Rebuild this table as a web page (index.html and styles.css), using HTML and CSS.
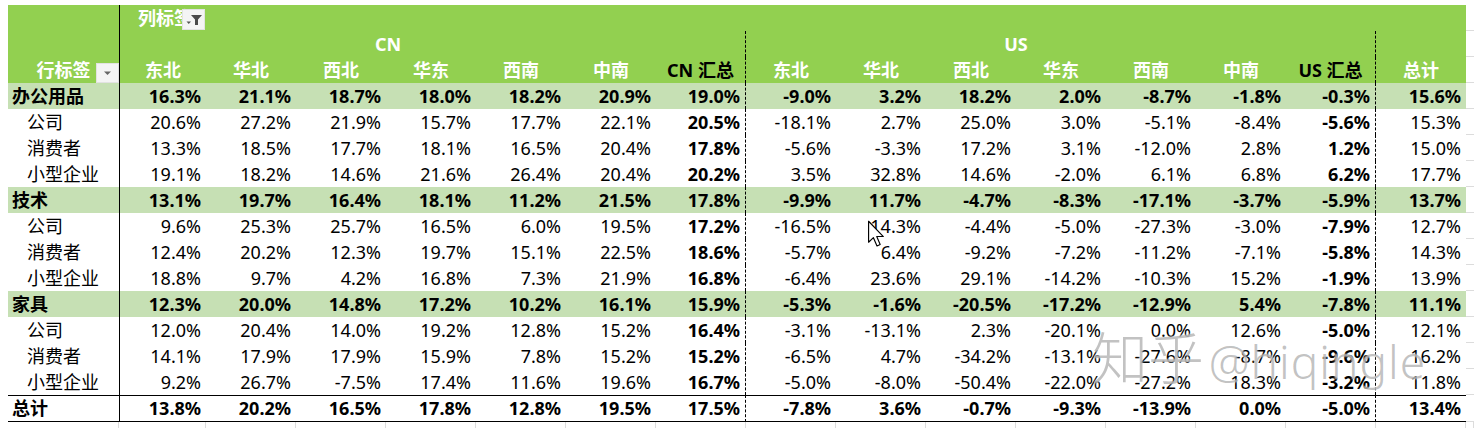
FILE: index.html
```html
<!DOCTYPE html>
<html lang="zh-CN">
<head>
<meta charset="utf-8">
<title>数据透视表</title>
<link rel="stylesheet" href="styles.css">
</head>
<body>
<div class="sheet">
  <div class="row hd">
    <div class="c"></div>
    <div class="c bl colhead">列标签<span class="btn btn-col"><svg width="23" height="21" viewBox="0 0 23 21"><path d="M4.5 12.5 L9 12.5 L6.75 15 Z" fill="#555"/><path d="M9 6 L20 6 L16 10.5 L16 16 L13 16 L13 10.5 Z" fill="#4a4a4a"/></svg></span></div>
    <div class="c span14"></div>
    <div class="ext"></div>
  </div>
  <div class="row hd">
    <div class="c"></div>
    <div class="c bl span6 ctr">CN</div>
    <div class="c sep"></div>
    <div class="c span6 ctr">US</div>
    <div class="c sep"></div>
    <div class="c"></div>
    <div class="ext"></div>
  </div>
  <div class="row hd">
    <div class="c ctr rowhead">行标签<span class="btn btn-row"><svg width="23" height="20" viewBox="0 0 23 20"><path d="M8 8.5 L15 8.5 L11.5 12 Z" fill="#666"/></svg></span></div>
    <div class="c bl ctr">东北</div>
    <div class="c ctr">华北</div>
    <div class="c ctr">西北</div>
    <div class="c ctr">华东</div>
    <div class="c ctr">西南</div>
    <div class="c ctr">中南</div>
    <div class="c ctr dk sep">CN 汇总</div>
    <div class="c ctr">东北</div>
    <div class="c ctr">华北</div>
    <div class="c ctr">西北</div>
    <div class="c ctr">华东</div>
    <div class="c ctr">西南</div>
    <div class="c ctr">中南</div>
    <div class="c ctr dk sep">US 汇总</div>
    <div class="c ctr">总计</div>
    <div class="ext"></div>
  </div>

  <div class="row cat">
    <div class="c lab">办公用品</div>
    <div class="c n bl">16.3%</div><div class="c n">21.1%</div><div class="c n">18.7%</div><div class="c n">18.0%</div><div class="c n">18.2%</div><div class="c n">20.9%</div><div class="c n sep">19.0%</div>
    <div class="c n">-9.0%</div><div class="c n">3.2%</div><div class="c n">18.2%</div><div class="c n">2.0%</div><div class="c n">-8.7%</div><div class="c n">-1.8%</div><div class="c n sep">-0.3%</div>
    <div class="c n">15.6%</div><div class="ext"></div>
  </div>
  <div class="row">
    <div class="c lab sub">公司</div>
    <div class="c n bl">20.6%</div><div class="c n">27.2%</div><div class="c n">21.9%</div><div class="c n">15.7%</div><div class="c n">17.7%</div><div class="c n">22.1%</div><div class="c n sep s">20.5%</div>
    <div class="c n">-18.1%</div><div class="c n">2.7%</div><div class="c n">25.0%</div><div class="c n">3.0%</div><div class="c n">-5.1%</div><div class="c n">-8.4%</div><div class="c n sep s">-5.6%</div>
    <div class="c n">15.3%</div><div class="ext"></div>
  </div>
  <div class="row">
    <div class="c lab sub">消费者</div>
    <div class="c n bl">13.3%</div><div class="c n">18.5%</div><div class="c n">17.7%</div><div class="c n">18.1%</div><div class="c n">16.5%</div><div class="c n">20.4%</div><div class="c n sep s">17.8%</div>
    <div class="c n">-5.6%</div><div class="c n">-3.3%</div><div class="c n">17.2%</div><div class="c n">3.1%</div><div class="c n">-12.0%</div><div class="c n">2.8%</div><div class="c n sep s">1.2%</div>
    <div class="c n">15.0%</div><div class="ext"></div>
  </div>
  <div class="row">
    <div class="c lab sub">小型企业</div>
    <div class="c n bl">19.1%</div><div class="c n">18.2%</div><div class="c n">14.6%</div><div class="c n">21.6%</div><div class="c n">26.4%</div><div class="c n">20.4%</div><div class="c n sep s">20.2%</div>
    <div class="c n">3.5%</div><div class="c n">32.8%</div><div class="c n">14.6%</div><div class="c n">-2.0%</div><div class="c n">6.1%</div><div class="c n">6.8%</div><div class="c n sep s">6.2%</div>
    <div class="c n">17.7%</div><div class="ext"></div>
  </div>

  <div class="row cat">
    <div class="c lab">技术</div>
    <div class="c n bl">13.1%</div><div class="c n">19.7%</div><div class="c n">16.4%</div><div class="c n">18.1%</div><div class="c n">11.2%</div><div class="c n">21.5%</div><div class="c n sep">17.8%</div>
    <div class="c n">-9.9%</div><div class="c n">11.7%</div><div class="c n">-4.7%</div><div class="c n">-8.3%</div><div class="c n">-17.1%</div><div class="c n">-3.7%</div><div class="c n sep">-5.9%</div>
    <div class="c n">13.7%</div><div class="ext"></div>
  </div>
  <div class="row">
    <div class="c lab sub">公司</div>
    <div class="c n bl">9.6%</div><div class="c n">25.3%</div><div class="c n">25.7%</div><div class="c n">16.5%</div><div class="c n">6.0%</div><div class="c n">19.5%</div><div class="c n sep s">17.2%</div>
    <div class="c n">-16.5%</div><div class="c n">14.3%</div><div class="c n">-4.4%</div><div class="c n">-5.0%</div><div class="c n">-27.3%</div><div class="c n">-3.0%</div><div class="c n sep s">-7.9%</div>
    <div class="c n">12.7%</div><div class="ext"></div>
  </div>
  <div class="row">
    <div class="c lab sub">消费者</div>
    <div class="c n bl">12.4%</div><div class="c n">20.2%</div><div class="c n">12.3%</div><div class="c n">19.7%</div><div class="c n">15.1%</div><div class="c n">22.5%</div><div class="c n sep s">18.6%</div>
    <div class="c n">-5.7%</div><div class="c n">6.4%</div><div class="c n">-9.2%</div><div class="c n">-7.2%</div><div class="c n">-11.2%</div><div class="c n">-7.1%</div><div class="c n sep s">-5.8%</div>
    <div class="c n">14.3%</div><div class="ext"></div>
  </div>
  <div class="row">
    <div class="c lab sub">小型企业</div>
    <div class="c n bl">18.8%</div><div class="c n">9.7%</div><div class="c n">4.2%</div><div class="c n">16.8%</div><div class="c n">7.3%</div><div class="c n">21.9%</div><div class="c n sep s">16.8%</div>
    <div class="c n">-6.4%</div><div class="c n">23.6%</div><div class="c n">29.1%</div><div class="c n">-14.2%</div><div class="c n">-10.3%</div><div class="c n">15.2%</div><div class="c n sep s">-1.9%</div>
    <div class="c n">13.9%</div><div class="ext"></div>
  </div>

  <div class="row cat">
    <div class="c lab">家具</div>
    <div class="c n bl">12.3%</div><div class="c n">20.0%</div><div class="c n">14.8%</div><div class="c n">17.2%</div><div class="c n">10.2%</div><div class="c n">16.1%</div><div class="c n sep">15.9%</div>
    <div class="c n">-5.3%</div><div class="c n">-1.6%</div><div class="c n">-20.5%</div><div class="c n">-17.2%</div><div class="c n">-12.9%</div><div class="c n">5.4%</div><div class="c n sep">-7.8%</div>
    <div class="c n">11.1%</div><div class="ext"></div>
  </div>
  <div class="row">
    <div class="c lab sub">公司</div>
    <div class="c n bl">12.0%</div><div class="c n">20.4%</div><div class="c n">14.0%</div><div class="c n">19.2%</div><div class="c n">12.8%</div><div class="c n">15.2%</div><div class="c n sep s">16.4%</div>
    <div class="c n">-3.1%</div><div class="c n">-13.1%</div><div class="c n">2.3%</div><div class="c n">-20.1%</div><div class="c n">0.0%</div><div class="c n">12.6%</div><div class="c n sep s">-5.0%</div>
    <div class="c n">12.1%</div><div class="ext"></div>
  </div>
  <div class="row">
    <div class="c lab sub">消费者</div>
    <div class="c n bl">14.1%</div><div class="c n">17.9%</div><div class="c n">17.9%</div><div class="c n">15.9%</div><div class="c n">7.8%</div><div class="c n">15.2%</div><div class="c n sep s">15.2%</div>
    <div class="c n">-6.5%</div><div class="c n">4.7%</div><div class="c n">-34.2%</div><div class="c n">-13.1%</div><div class="c n">-27.6%</div><div class="c n">-8.7%</div><div class="c n sep s">-9.6%</div>
    <div class="c n">16.2%</div><div class="ext"></div>
  </div>
  <div class="row">
    <div class="c lab sub">小型企业</div>
    <div class="c n bl">9.2%</div><div class="c n">26.7%</div><div class="c n">-7.5%</div><div class="c n">17.4%</div><div class="c n">11.6%</div><div class="c n">19.6%</div><div class="c n sep s">16.7%</div>
    <div class="c n">-5.0%</div><div class="c n">-8.0%</div><div class="c n">-50.4%</div><div class="c n">-22.0%</div><div class="c n">-27.2%</div><div class="c n">18.3%</div><div class="c n sep s">-3.2%</div>
    <div class="c n">11.8%</div><div class="ext"></div>
  </div>

  <div class="row tot">
    <div class="c lab">总计</div>
    <div class="c n bl">13.8%</div><div class="c n">20.2%</div><div class="c n">16.5%</div><div class="c n">17.8%</div><div class="c n">12.8%</div><div class="c n">19.5%</div><div class="c n sep">17.5%</div>
    <div class="c n">-7.8%</div><div class="c n">3.6%</div><div class="c n">-0.7%</div><div class="c n">-9.3%</div><div class="c n">-13.9%</div><div class="c n">0.0%</div><div class="c n sep">-5.0%</div>
    <div class="c n">13.4%</div><div class="ext"></div>
  </div>

  <div class="row foot">
    <div class="g"></div><div class="g"></div><div class="g"></div><div class="g"></div><div class="g"></div><div class="g"></div><div class="g"></div><div class="g"></div><div class="g"></div><div class="g"></div><div class="g"></div><div class="g"></div><div class="g"></div><div class="g"></div><div class="g"></div><div class="g"></div><div class="g"></div>
  </div>

  <div class="watermark"><span class="wm-cn">知乎</span> <span class="wm-en">@hiqingle</span></div>
  <svg class="cursor" width="21" height="28" viewBox="0 0 16 22"><path d="M1 1 L1 17.5 L4.8 13.9 L7.6 20.4 L10.1 19.3 L7.4 13 L12.6 13 Z" fill="#fff" stroke="#000" stroke-width="0.9" stroke-linejoin="round"/></svg>
</div>
</body>
</html>
```

FILE: styles.css
```css
body {
  margin: 0;
  background: #ffffff;
  font-family: "Noto Sans", "Noto Sans CJK SC", sans-serif;
  font-size: 18px;
  color: #000;
}

.sheet {
  position: relative;
  padding: 5px 0 0 8px;
}

.row {
  display: grid;
  grid-template-columns: 111px 87px repeat(14, 90px) 8px;
  height: 26px;
}

.c {
  box-sizing: border-box;
  line-height: 26px;
  white-space: nowrap;
  overflow: hidden;
}

.span14 { grid-column: span 14; }
.span6 { grid-column: span 6; }
.ctr { text-align: center; }

.hd .c {
  background: #92d050;
  color: #fff;
  font-weight: 700;
}

.hd .c.dk { color: #000; }

.colhead {
  position: relative;
  padding-left: 18px;
}

.rowhead {
  position: relative;
}

.btn {
  position: absolute;
  display: block;
  background: #f4f4f4;
  box-shadow: inset 0 0 0 1px #e2e2e2;
}

.btn svg { display: block; }

.btn-col {
  right: 1px;
  top: 4px;
  width: 23px;
  height: 21px;
}

.btn-row {
  right: 0;
  top: 6px;
  width: 23px;
  height: 20px;
}

.cat .c {
  background: #c6e0b4;
  font-weight: 700;
}

.lab { padding-left: 4px; }
.lab.sub { padding-left: 19px; }

.n {
  text-align: right;
  padding-right: 5px;
}

.s { font-weight: 700; }

.bl { border-left: 1px solid #000; }
.sep { border-right: 1px dashed #000; }

.ext {
  box-sizing: border-box;
  border-bottom: 1px solid #dcdcdc;
}

.row.tot { height: 27px; }

.tot .c {
  border-top: 1px solid #000;
  border-bottom: 1px solid #000;
  line-height: 25px;
  font-weight: 700;
}

.row.foot { height: 7px; }

.g {
  box-sizing: border-box;
  border-right: 1px solid #dcdcdc;
}

.watermark {
  position: absolute;
  left: 1092px;
  top: 324px;
  white-space: nowrap;
  color: rgba(120, 120, 120, 0.45);
  text-shadow: 0 0 2px rgba(255, 255, 255, 0.95);
  line-height: 62px;
}

.wm-cn {
  font-family: "Noto Sans CJK SC", sans-serif;
  font-size: 56px;
  font-weight: 300;
}

.wm-en {
  font-family: "Noto Sans", sans-serif;
  font-size: 46px;
  font-weight: 300;
  letter-spacing: 1px;
}

.cursor {
  position: absolute;
  left: 867px;
  top: 220px;
}
```
